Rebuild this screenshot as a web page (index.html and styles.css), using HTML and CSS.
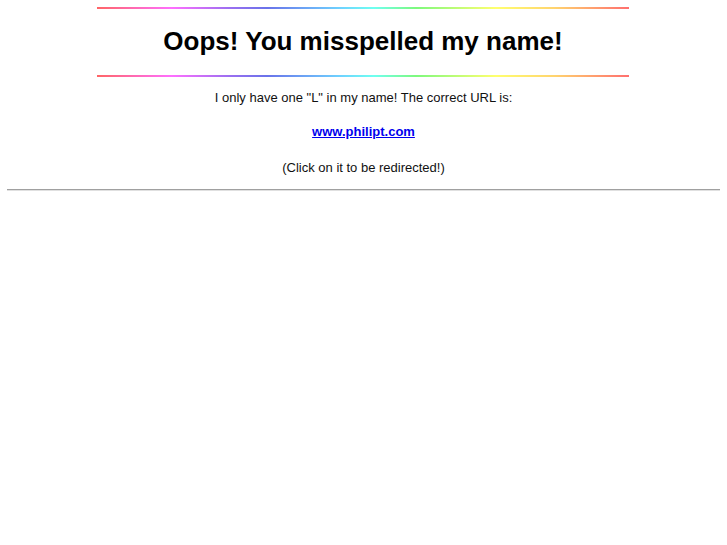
FILE: index.html
```html
<!DOCTYPE html>
<html>
<head>
<meta charset="utf-8">
<link rel="stylesheet" href="styles.css">
<title>Oops</title>
</head>
<body>
<div class="page">
  <div class="banner">
    <div class="rainbow"></div>
    <h1 class="title">Oops! You misspelled my name!</h1>
    <div class="rainbow"></div>
  </div>
  <p class="line first">I only have one "L" in my name! The correct URL is:</p>
  <p class="line second"><a class="link" href="#">www.philipt.com</a></p>
  <p class="line third">(Click on it to be redirected!)</p>
</div>
<hr class="rule">
</body>
</html>
```
FILE: styles.css
```css
html, body {
  margin: 0;
  padding: 0;
  background: #fff;
}
body {
  padding: 7px 7px 0 7px;
  font-family: "Liberation Sans", Arial, sans-serif;
  color: #111;
}
.page {
  display: flex;
  flex-direction: column;
  align-items: center;
}
.banner {
  width: 532px;
  display: flex;
  flex-direction: column;
  align-items: center;
  margin-left: -1px;
}
.rainbow {
  width: 532px;
  height: 2px;
  background: linear-gradient(to right, #ff4a4a 0%, #ff55ff 14%, #8855ee 25%, #4f5ae6 32%, #55ccff 46%, #55ffee 52%, #66f866 60%, #ffff55 75%, #ffcc55 86%, #ff5555 100%);
  opacity: 0.85;
}
.title {
  margin: 0;
  height: 66px;
  box-sizing: border-box;
  padding-bottom: 2px;
  display: flex;
  align-items: center;
  font-size: 26px;
  font-weight: bold;
  color: #000;
}
.line {
  margin: 0;
  font-size: 13px;
  line-height: 15px;
  text-align: center;
}
.first {
  margin-top: 13px;
}
.second {
  margin-top: 19px;
}
.third {
  margin-top: 21px;
}
.link {
  color: #0000ee;
  font-weight: bold;
  text-decoration: underline;
}
.rule {
  margin: 14px 0 0 0;
  border: none;
  border-top: 1px solid #a0a0a0;
  border-bottom: 1px solid #e0e0e0;
  height: 0;
}
```
